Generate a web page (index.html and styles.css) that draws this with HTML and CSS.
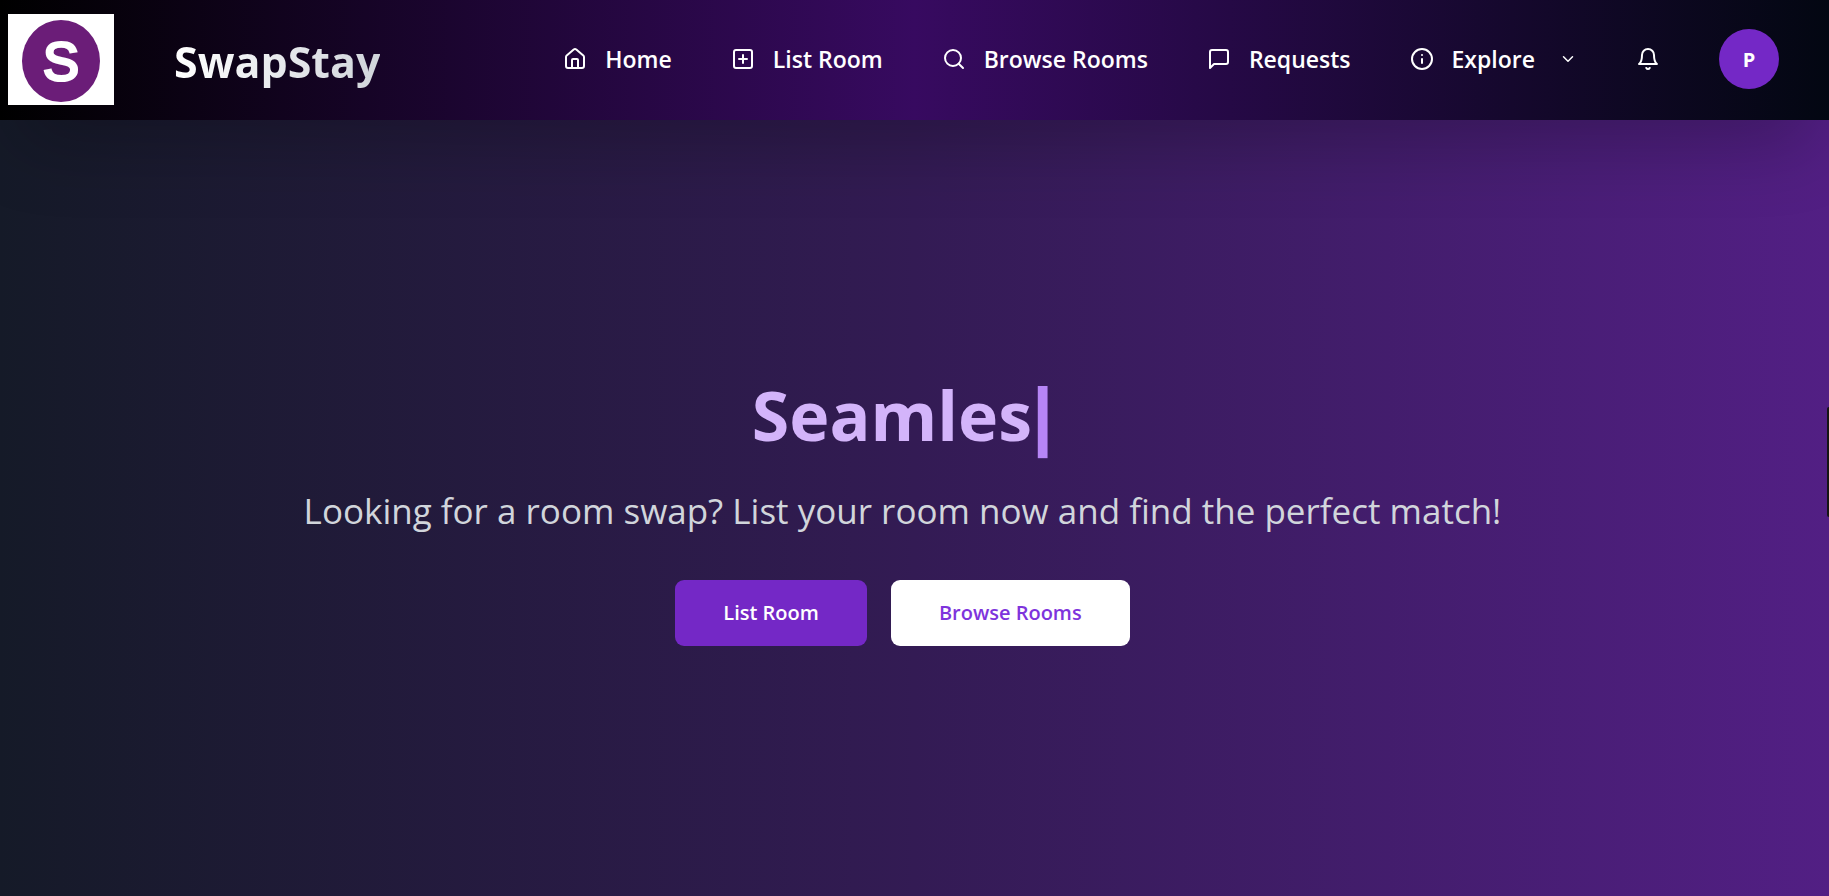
FILE: index.html
```html
<!DOCTYPE html>
<html lang="en">
<head>
<meta charset="utf-8">
<title>SwapStay</title>
<link rel="stylesheet" href="styles.css">
</head>
<body>
<header class="header">
  <svg class="logo" viewBox="0 0 106 91" role="img" aria-label="SwapStay logo">
    <rect width="106" height="91" fill="#fff"/>
    <ellipse cx="53" cy="47" rx="39" ry="41" fill="#6b1d78"/>
    <text x="53" y="66" class="logo-letter">S</text>
  </svg>
  <a class="brand" href="#">SwapStay</a>
  <nav class="nav">
    <a class="nav-link" href="#"><svg class="icon" viewBox="0 0 24 24"><path d="M15 21v-8a1 1 0 0 0-1-1h-4a1 1 0 0 0-1 1v8"/><path d="M3 10a2 2 0 0 1 .709-1.528l7-6a2 2 0 0 1 2.582 0l7 6A2 2 0 0 1 21 10v9a2 2 0 0 1-2 2H5a2 2 0 0 1-2-2z"/></svg>Home</a>
    <a class="nav-link" href="#"><svg class="icon" viewBox="0 0 24 24"><rect x="3" y="3" width="18" height="18" rx="2"/><path d="M8 12h8M12 8v8"/></svg>List Room</a>
    <a class="nav-link" href="#"><svg class="icon" viewBox="0 0 24 24"><circle cx="11" cy="11" r="8"/><path d="m21 21-4.3-4.3"/></svg>Browse Rooms</a>
    <a class="nav-link" href="#"><svg class="icon" viewBox="0 0 24 24"><path d="M21 15a2 2 0 0 1-2 2H7l-4 4V5a2 2 0 0 1 2-2h14a2 2 0 0 1 2 2z"/></svg>Requests</a>
    <button class="nav-link" type="button"><svg class="icon" viewBox="0 0 24 24"><circle cx="12" cy="12" r="10"/><path d="M12 16v-4M12 8h.01"/></svg>Explore<svg class="icon chevron" viewBox="0 0 24 24"><path d="m6 9 6 6 6-6"/></svg></button>
    <button class="nav-link" type="button" aria-label="Notifications"><svg class="icon" viewBox="0 0 24 24"><path d="M6 8a6 6 0 0 1 12 0c0 7 3 9 3 9H3s3-2 3-9"/><path d="M10.3 21a1.94 1.94 0 0 0 3.4 0"/></svg></button>
    <button class="avatar" type="button">P</button>
  </nav>
</header>
<main class="hero">
  <h1 class="title">Seamles<span class="cursor">|</span></h1>
  <p class="subtitle">Looking for a room swap? List your room now and find the perfect match!</p>
  <div class="actions">
    <a class="button button-primary" href="#">List Room</a>
    <a class="button button-light" href="#">Browse Rooms</a>
  </div>
</main>
<div class="side-tab"></div>
</body>
</html>
```

FILE: styles.css
```css
* {
  box-sizing: border-box;
}

body {
  margin: 0;
  min-height: 100vh;
  display: flex;
  flex-direction: column;
  overflow-x: hidden;
  font-family: "Open Sans", "Noto Sans", sans-serif;
  color: #fff;
  background: linear-gradient(to right, #151a28, #331b54 50%, #521f84);
}

a {
  color: inherit;
  text-decoration: none;
}

button {
  font: inherit;
  color: inherit;
  background: none;
  border: 0;
  padding: 0;
  cursor: pointer;
}

.header {
  display: flex;
  align-items: center;
  height: 120px;
  padding: 0 50px 2px 8px;
  background: linear-gradient(to right, #000, #370a60 50%, #030712);
  box-shadow: 0 38px 75px -18px rgba(0, 0, 0, 0.25);
}

.logo {
  width: 106px;
  height: 91px;
  flex: none;
}

.logo-letter {
  font: 54px "Liberation Sans", sans-serif;
  fill: #fff;
  stroke: #fff;
  stroke-width: 3;
  text-anchor: middle;
}

.brand {
  margin-left: 60px;
  padding-top: 6px;
  font-size: 43px;
  font-weight: 700;
  line-height: 60px;
  color: transparent;
  background: linear-gradient(to right, #fff, #d1d5db);
  background-clip: text;
}

.nav {
  display: flex;
  align-items: center;
  gap: 59px;
  margin-left: auto;
}

.nav-link {
  display: flex;
  align-items: center;
  gap: 18px;
  font-size: 23px;
  font-weight: 600;
  line-height: 36px;
  white-space: nowrap;
}

.icon {
  width: 24px;
  height: 24px;
  flex: none;
  fill: none;
  stroke: currentColor;
  stroke-width: 2;
  stroke-linecap: round;
  stroke-linejoin: round;
}

.chevron {
  width: 18px;
  height: 18px;
  margin-left: 6px;
}

.avatar {
  width: 60px;
  height: 60px;
  border-radius: 50%;
  background: #7428c6;
  font-size: 20px;
  font-weight: 700;
}

.hero {
  flex: 1;
  display: flex;
  flex-direction: column;
  align-items: center;
  justify-content: center;
  padding: 0 24px 0 0;
  text-align: center;
}

.title {
  margin: 0 0 30px;
  font-size: 68px;
  font-weight: 700;
  line-height: 90px;
  color: #d3b4fa;
}

.cursor {
  font-family: "Liberation Sans", sans-serif;
  font-size: 76px;
  line-height: 1;
  color: #b685f6;
}

.subtitle {
  margin: 0 0 48px;
  font-size: 35px;
  line-height: 42px;
  color: #d1d5db;
}

.actions {
  display: flex;
  gap: 24px;
}

.button {
  padding: 18px 48px;
  border-radius: 9px;
  font-size: 20px;
  font-weight: 600;
  line-height: 30px;
}

.button-primary {
  background: #7428c6;
}

.button-light {
  background: #fff;
  color: #7e34dc;
}

.side-tab {
  position: fixed;
  top: 407px;
  right: 0;
  width: 2px;
  height: 110px;
  border-radius: 2px 0 0 2px;
  background: #151515;
}
```
